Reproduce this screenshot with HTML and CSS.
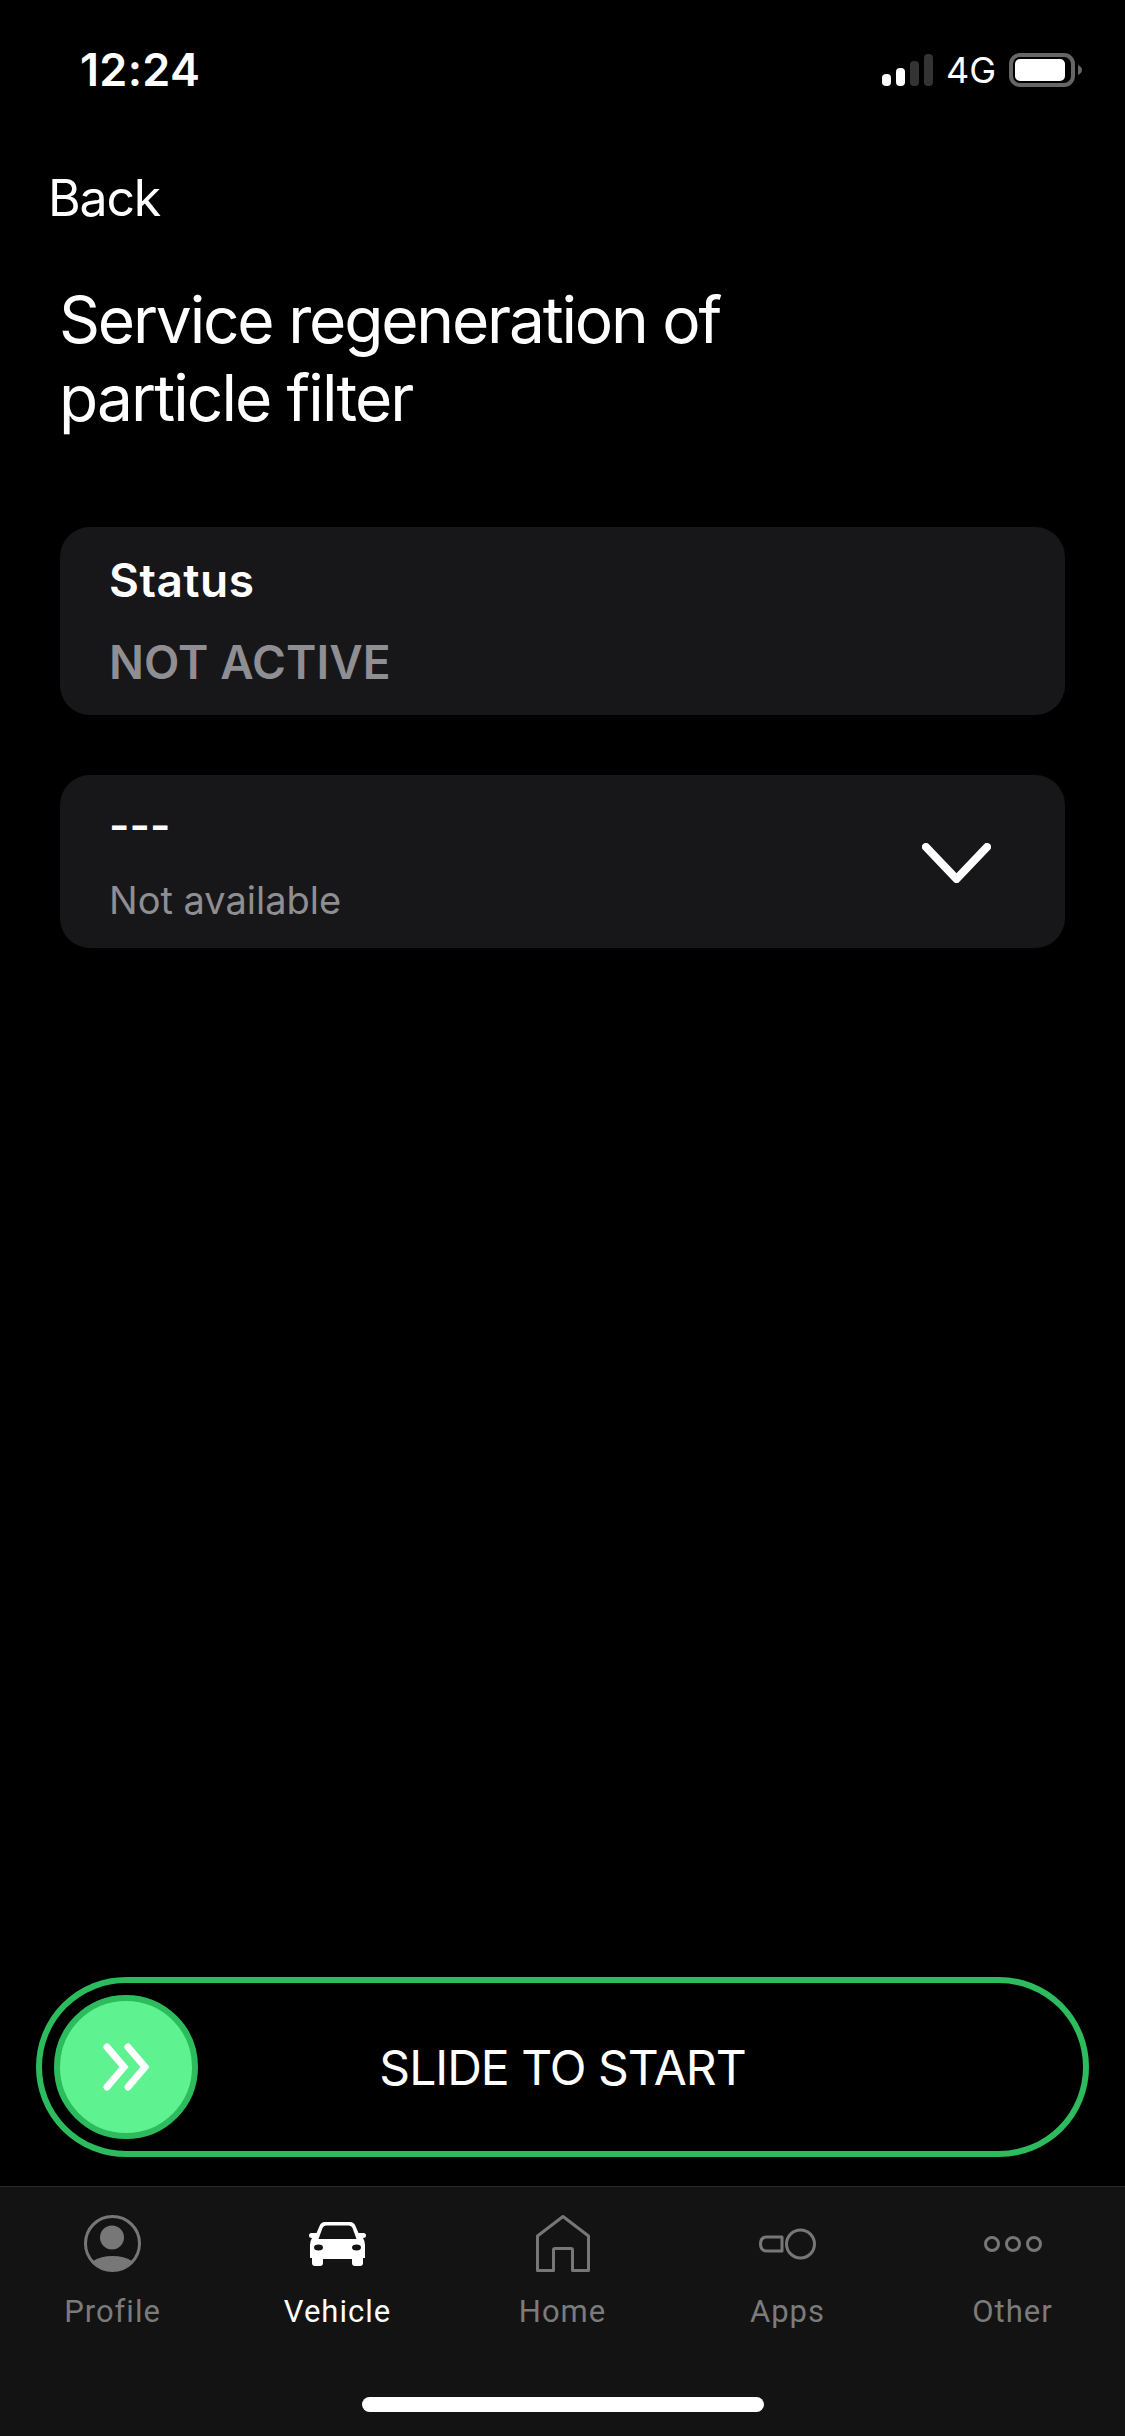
FILE: index.html
```html
<!DOCTYPE html>
<html lang="en">
<head>
    <meta charset="UTF-8">
    <title>Service regeneration of particle filter</title>
    <meta name="viewport" content="width=device-width, initial-scale=1.0">
    <link rel="stylesheet" href="styles.css">
</head>
<body>
    <div class="page">
        <header class="status-bar">
            <span class="time">12:24</span>
            <div class="status-icons">
                <svg class="signal" width="51" height="32" viewBox="0 0 51 32">
                    <rect x="0" y="20" width="9" height="12" rx="4" fill="#fff"/>
                    <rect x="14" y="14" width="9" height="18" rx="4" fill="#fff"/>
                    <rect x="28" y="7" width="9" height="25" rx="4" fill="#333"/>
                    <rect x="42" y="0" width="9" height="32" rx="4" fill="#333"/>
                </svg>
                <span class="network">4G</span>
                <svg class="battery" width="73" height="34" viewBox="0 0 73 34">
                    <rect x="2" y="2" width="62" height="30" rx="9" fill="none" stroke="#666" stroke-width="4"/>
                    <rect x="6" y="6" width="50" height="22" rx="5" fill="#fff"/>
                    <path d="M69 12 Q73 14 73 17 Q73 20 69 22Z" fill="#666"/>
                </svg>
            </div>
        </header>

        <a class="back" href="#">Back</a>
        <h1 class="title">Service regeneration of<br><span class="title-tail">particle filter</span></h1>

        <section class="card">
            <div class="card-label">Status</div>
            <div class="card-state">NOT ACTIVE</div>
        </section>

        <section class="card card-select">
            <div>
                <div class="select-value">---</div>
                <div class="select-note">Not available</div>
            </div>
            <svg class="chevron" width="69" height="40" viewBox="0 0 69 40">
                <path d="M4 4 L34.5 36 L65 4" fill="none" stroke="#fff" stroke-width="8" stroke-linecap="round" stroke-linejoin="round"/>
            </svg>
        </section>

        <div class="spacer"></div>

        <div class="slider">
            <div class="slider-knob">
                <svg width="46" height="48" viewBox="0 0 46 48">
                    <path d="M4 4 L21 24 L4 44 M25 4 L42 24 L25 44" fill="none" stroke="#fff" stroke-width="7" stroke-linecap="round" stroke-linejoin="miter"/>
                </svg>
            </div>
            <span class="slider-text">SLIDE TO START</span>
        </div>

        <nav class="tab-bar">
            <div class="tabs">
                <a class="tab" href="#">
                    <span class="tab-icon">
                        <svg width="57" height="57" viewBox="0 0 57 57">
                            <ellipse cx="28.5" cy="28.5" rx="27" ry="27" fill="none" stroke="#777" stroke-width="3"/>
                            <circle cx="28" cy="22.5" r="12" fill="#777"/>
                            <path d="M9 46 Q17 41 28.5 41 Q40 41 48 46 A24 24 0 0 1 9 46Z" fill="#777"/>
                        </svg>
                    </span>
                    Profile
                </a>
                <a class="tab active" href="#">
                    <span class="tab-icon">
                        <svg width="57" height="44" viewBox="0 0 57 44">
                            <path fill="#fff" fill-rule="evenodd" d="M16 0 H41 Q45 0 46.5 4 L49.5 11 H54.5 Q57 11 57 13.5 Q57 16 54 16 Q56 19 56 23 V36 H54 V41 Q54 44 51 44 H46 Q43 44 43 41 V37 H14 V41 Q14 44 11 44 H6 Q3 44 3 41 V36 H1 V23 Q1 19 3 16 Q0 16 0 13.5 Q0 11 2.5 11 H7.5 L10.5 4 Q12 0 16 0Z M17 3.5 Q14.5 3.5 13.5 6 L9.5 17 H47.5 L43.5 6 Q42.5 3.5 40 3.5Z"/>
                            <ellipse cx="9.5" cy="25.5" rx="4.5" ry="3" fill="#131313"/>
                            <ellipse cx="47.5" cy="25.5" rx="4.5" ry="3" fill="#131313"/>
                        </svg>
                    </span>
                    Vehicle
                </a>
                <a class="tab" href="#">
                    <span class="tab-icon">
                        <svg width="54" height="57" viewBox="0 0 54 57">
                            <path d="M27 1.5 L52.5 21 V55.5 H36.5 V35 Q36.5 33.5 35 33.5 H19 Q17.5 33.5 17.5 35 V55.5 H1.5 V21Z" fill="none" stroke="#777" stroke-width="3" stroke-linejoin="round"/>
                        </svg>
                    </span>
                    Home
                </a>
                <a class="tab" href="#">
                    <span class="tab-icon">
                        <svg width="57" height="32" viewBox="0 0 57 32">
                            <circle cx="41.5" cy="16" r="14" fill="none" stroke="#777" stroke-width="3"/>
                            <path d="M23 9 H8 Q1.5 9 1.5 16 Q1.5 23 8 23 H23Z" fill="none" stroke="#777" stroke-width="3" stroke-linejoin="round"/>
                        </svg>
                    </span>
                    Apps
                </a>
                <a class="tab" href="#">
                    <span class="tab-icon">
                        <svg width="58" height="18" viewBox="0 0 58 18">
                            <circle cx="8" cy="9" r="6.5" fill="none" stroke="#777" stroke-width="3"/>
                            <circle cx="29" cy="9" r="6.5" fill="none" stroke="#777" stroke-width="3"/>
                            <circle cx="50" cy="9" r="6.5" fill="none" stroke="#777" stroke-width="3"/>
                        </svg>
                    </span>
                    Other
                </a>
            </div>
            <div class="home-indicator"></div>
        </nav>
    </div>
</body>
</html>
```

FILE: styles.css
```css
html { box-sizing: border-box; }
*, *:before, *:after { box-sizing: inherit; }
body {
    margin: 0;
    background: #000;
    color: #fff;
    font-family: Inter, "Noto Sans", sans-serif;
}
a {
    color: inherit;
    text-decoration: none;
}
.page {
    height: 2436px;
    display: flex;
    flex-direction: column;
}

/* status bar */
.status-bar {
    height: 106px;
    padding: 45px 43px 0 80px;
    display: flex;
    justify-content: space-between;
}
.time {
    font-size: 45px;
    font-weight: 600;
    line-height: 50px;
    letter-spacing: 0.3px;
}
.status-icons {
    height: 50px;
    display: flex;
    align-items: center;
}
.network {
    margin: 0 13px 0 13px;
    font-size: 36px;
    line-height: 50px;
}

/* heading */
.back {
    margin-left: 48px;
    font-size: 50px;
    line-height: 60px;
    height: 60px;
    margin-top: 62px;
    letter-spacing: -1.2px;
}
.title {
    margin: 53px 0 90px 59px;
    font-size: 64px;
    font-weight: 400;
    line-height: 78px;
    letter-spacing: -2.2px;
}
.title-tail {
    letter-spacing: -1.9px;
}

/* cards */
.card {
    margin: 0 60px;
    padding: 25px 50px 25px 49px;
    background: #171719;
    border-radius: 30px;
}
.card-label {
    font-size: 46px;
    font-weight: 600;
    line-height: 56px;
    letter-spacing: 0.5px;
}
.card-state {
    margin-top: 26px;
    color: #8e8e93;
    font-size: 46px;
    font-weight: 600;
    line-height: 56px;
    letter-spacing: 0.1px;
}
.card-select {
    margin-top: 60px;
    padding-right: 74px;
    display: flex;
    justify-content: space-between;
    align-items: center;
}
.select-value {
    font-size: 44px;
    font-weight: 600;
    line-height: 50px;
}
.select-note {
    margin-top: 27px;
    color: #8e8e93;
    font-size: 38px;
    line-height: 46px;
}
.chevron {
    margin-top: 2px;
}
.spacer {
    flex: 1;
}

/* slide to start */
.slider {
    position: relative;
    height: 180px;
    margin: 0 36px 29px 36px;
    border: 6px solid #2cbb5d;
    border-radius: 90px;
    display: flex;
    justify-content: center;
    align-items: center;
}
.slider-knob {
    position: absolute;
    left: 12px;
    top: 12px;
    width: 144px;
    height: 144px;
    border: 6px solid #2cbb5d;
    border-radius: 50%;
    background: #5ff291;
    display: flex;
    justify-content: center;
    align-items: center;
}
.slider-text {
    font-size: 48px;
    letter-spacing: -1px;
}

/* bottom tabs */
.tab-bar {
    height: 250px;
    padding-top: 28px;
    background: #131313;
    border-top: 1px solid #2b2b2b;
}
.tabs {
    display: grid;
    grid-template-columns: repeat(5, 225px);
}
.tab {
    display: flex;
    flex-direction: column;
    align-items: center;
    color: #7b7b7b;
    font-family: Roboto, Inter, sans-serif;
    font-size: 31px;
    line-height: 36px;
    letter-spacing: 1px;
}
.tab.active {
    color: #fff;
}
.tab-icon {
    height: 57px;
    margin-bottom: 22px;
    display: flex;
    align-items: center;
}
.home-indicator {
    width: 402px;
    height: 15px;
    margin: 67px auto 0;
    background: #fff;
    border-radius: 8px;
}
```
